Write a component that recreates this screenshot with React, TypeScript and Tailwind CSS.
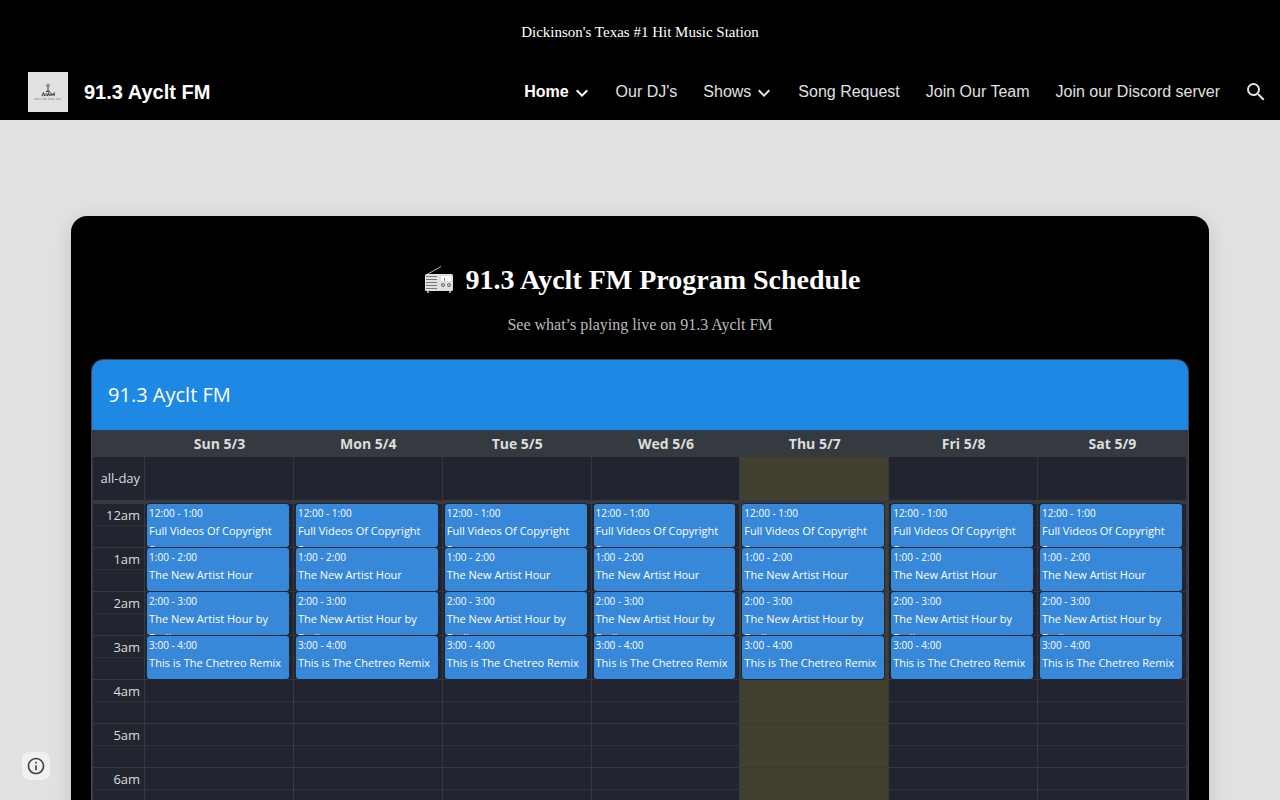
import React from 'react';

const NAV_ITEMS = [
  { label: 'Home', menu: true, active: true },
  { label: "Our DJ's" },
  { label: 'Shows', menu: true },
  { label: 'Song Request' },
  { label: 'Join Our Team' },
  { label: 'Join our Discord server' },
];

const DAYS = ['Sun 5/3', 'Mon 5/4', 'Tue 5/5', 'Wed 5/6', 'Thu 5/7', 'Fri 5/8', 'Sat 5/9'];
const TODAY = 'Thu 5/7';

const HOURS = [
  { label: '12am', time: '12:00 - 1:00', title: 'Full Videos Of Copyright Songs' },
  { label: '1am', time: '1:00 - 2:00', title: 'The New Artist Hour' },
  { label: '2am', time: '2:00 - 3:00', title: 'The New Artist Hour by Emily' },
  { label: '3am', time: '3:00 - 4:00', title: 'This is The Chetreo Remix' },
  { label: '4am' },
  { label: '5am' },
  { label: '6am' },
  { label: '7am' },
  { label: '8am' },
];

export default function App(): React.ReactElement {
  return (
    <div className="h-screen overflow-hidden bg-[#e1e1e1]">
      <Header />
      <main className="mx-auto mt-24 w-8/9 rounded-2xl bg-black px-5 pt-11 shadow-[0_4px_20px_rgba(0,0,0,0.12)]">
        <h1 className="flex items-center justify-center gap-2 font-['Liberation_Serif',serif] text-[28px] leading-10 font-bold text-white">
          <RadioIcon />
          91.3 Ayclt FM Program Schedule
        </h1>
        <p className="mt-[11px] mb-5 text-center font-['Liberation_Serif',serif] text-base leading-7 text-[#bbbbbb]">
          See what’s playing live on 91.3 Ayclt FM
        </p>
        <Calendar />
      </main>
      <button
        type="button"
        aria-label="Site information"
        className="fixed bottom-5 left-[22px] grid size-7 place-items-center rounded-lg bg-[#f1f1f1]"
      >
        <svg viewBox="0 0 24 24" className="size-5 fill-[#444444]">
          <path d="M11 7h2v2h-2zm0 4h2v6h-2zm1-9C6.48 2 2 6.48 2 12s4.48 10 10 10 10-4.48 10-10S17.52 2 12 2zm0 18c-4.41 0-8-3.59-8-8s3.59-8 8-8 8 3.59 8 8-3.59 8-8 8z" />
        </svg>
      </button>
    </div>
  );
}

function Header(): React.ReactElement {
  return (
    <header className="bg-black text-white">
      <p className="text-center font-['Liberation_Serif',serif] text-[15px] leading-[64px]">
        Dickinson's Texas #1 Hit Music Station
      </p>
      <div className="flex h-14 items-center justify-between pr-3 pl-7 font-['Liberation_Sans',sans-serif]">
        <a href="#" className="flex items-center gap-4 text-xl font-bold">
          <Logo />
          91.3 Ayclt FM
        </a>
        <div className="flex items-center gap-6">
          <nav className="flex items-center gap-[26px]">
            {NAV_ITEMS.map((item) => (
              <a
                key={item.label}
                href="#"
                className={
                  item.active
                    ? 'flex items-center gap-[7px] font-bold text-white'
                    : 'flex items-center gap-[7px] text-[#e0e0e0]'
                }
              >
                {item.label}
                {item.menu && (
                  <svg viewBox="6 8 12 8" className="mt-0.5 mr-0.5 h-2 w-3 fill-current">
                    <path d="M7.41 8.59 12 13.17l4.59-4.58L18 10l-6 6-6-6z" />
                  </svg>
                )}
              </a>
            ))}
          </nav>
          <button type="button" aria-label="Search">
            <svg viewBox="0 0 24 24" className="size-6 fill-[#e0e0e0]">
              <path d="M15.5 14h-.79l-.28-.27A6.47 6.47 0 0 0 16 9.5 6.5 6.5 0 1 0 9.5 16c1.61 0 3.09-.59 4.23-1.57l.27.28v.79l5 4.99L20.49 19l-4.99-5zm-6 0C7.01 14 5 11.99 5 9.5S7.01 5 9.5 5 14 7.01 14 9.5 11.99 14 9.5 14z" />
            </svg>
          </button>
        </div>
      </div>
    </header>
  );
}

function Calendar(): React.ReactElement {
  return (
    <section className="overflow-hidden rounded-xl border border-[#444444] font-['Open_Sans','Noto_Sans',sans-serif]">
      <h2 className="bg-[#1e88e5] px-4 text-[20px] leading-[70px] text-white">91.3 Ayclt FM</h2>
      <table className="w-full table-fixed border-separate border-spacing-0 border-x border-[#343a40] bg-[#22242f] text-[#dddddd]">
        <thead>
          <tr className="h-[27px] bg-[#343a40] text-[14px] leading-5">
            <th className="w-[52px] p-0" />
            {DAYS.map((day) => (
              <th key={day} className="p-0 font-bold">
                {day}
              </th>
            ))}
          </tr>
        </thead>
        <tbody>
          <tr className="h-[47px]">
            <th className="border-r border-b-4 border-[#343a40] p-0 pr-1 text-right text-[13px] font-medium">
              all-day
            </th>
            {DAYS.map((day) => (
              <td
                key={day}
                className={
                  day === TODAY
                    ? 'border-r border-b-4 border-[#343a40] bg-[#42402f]'
                    : 'border-r border-b-4 border-[#343a40]'
                }
              />
            ))}
          </tr>
          {HOURS.map((hour) => (
            <tr key={hour.label} className="h-11">
              <th className="border-r border-b border-[#343a40] p-0 align-top text-[13px] font-medium">
                <div className="h-[22px] border-b border-dotted border-[#343a40] pr-1 text-right leading-[22px]">
                  {hour.label}
                </div>
              </th>
              {DAYS.map((day) => (
                <td
                  key={day}
                  className={
                    day === TODAY
                      ? 'relative border-r border-b border-[#343a40] bg-[#42402f] p-0 align-top'
                      : 'relative border-r border-b border-[#343a40] p-0 align-top'
                  }
                >
                  <div className="h-[22px] border-b border-dotted border-[#343a40]" />
                  {hour.title && <Event time={hour.time} title={hour.title} />}
                </td>
              ))}
            </tr>
          ))}
        </tbody>
      </table>
    </section>
  );
}

function Event({ time, title }: { time: string; title: string }): React.ReactElement {
  return (
    <a
      href="#"
      className="absolute inset-y-0 right-1 left-[2px] overflow-hidden rounded-[3px] bg-[#3788d8] px-[2px] pt-px font-medium text-white shadow-[0_0_0_1px_#22242f]"
    >
      <div className="text-[10px] leading-4">{time}</div>
      <div className="text-[11px] leading-[19px]">{title}</div>
    </a>
  );
}

// Radio tower over the station name and tagline.
function Logo(): React.ReactElement {
  return (
    <svg viewBox="0 0 40 40" className="size-10">
      <rect width="40" height="40" fill="#e1e1e1" />
      <circle cx="20" cy="13.5" r="1.8" fill="#8a8a8a" />
      <path d="M20 14v5.5" stroke="#777777" strokeWidth="1.6" />
      <path d="M18 19.5h4" stroke="#444444" strokeWidth="1.2" />
      <path
        d="M14 24l1.5-3 1.2 3M18 21.3v2.6M19.2 24l1.3-2.8 1.3 2.8M23 24v-2.7l1.6 1.6 1.6-1.6V24"
        fill="none"
        stroke="#444444"
        strokeWidth="1.1"
      />
      <path d="M6 27h28" stroke="#9c9c9c" strokeWidth="1" strokeDasharray="7 1 5 1" />
    </svg>
  );
}

function RadioIcon(): React.ReactElement {
  return (
    <svg viewBox="-4 0 38 28" className="h-7 w-[38px]">
      <path d="M3 8.500 17 .5" stroke="#b5b5b5" strokeWidth="1" />
      <rect x="3" y="24" width="2" height="3" fill="#999999" />
      <rect x="25" y="24" width="2" height="3" fill="#999999" />
      <rect x="1" y="8" width="28" height="17" rx="1.5" fill="#e0e0e0" />
      <path
        d="M2 10.500h11M2 13.500h11M2 16.500h11M2 19.500h11M2 22.500h11"
        stroke="#777777"
        strokeWidth="1"
      />
      <rect x="17" y="10" width="10" height="5" fill="#ffffff" />
      <rect x="20" y="12" width="1" height="3" fill="#f4511e" />
      <circle cx="19" cy="19" r="1.6" fill="#bbbbbb" stroke="#777777" />
      <circle cx="25" cy="19" r="1.6" fill="#bbbbbb" stroke="#777777" />
    </svg>
  );
}
